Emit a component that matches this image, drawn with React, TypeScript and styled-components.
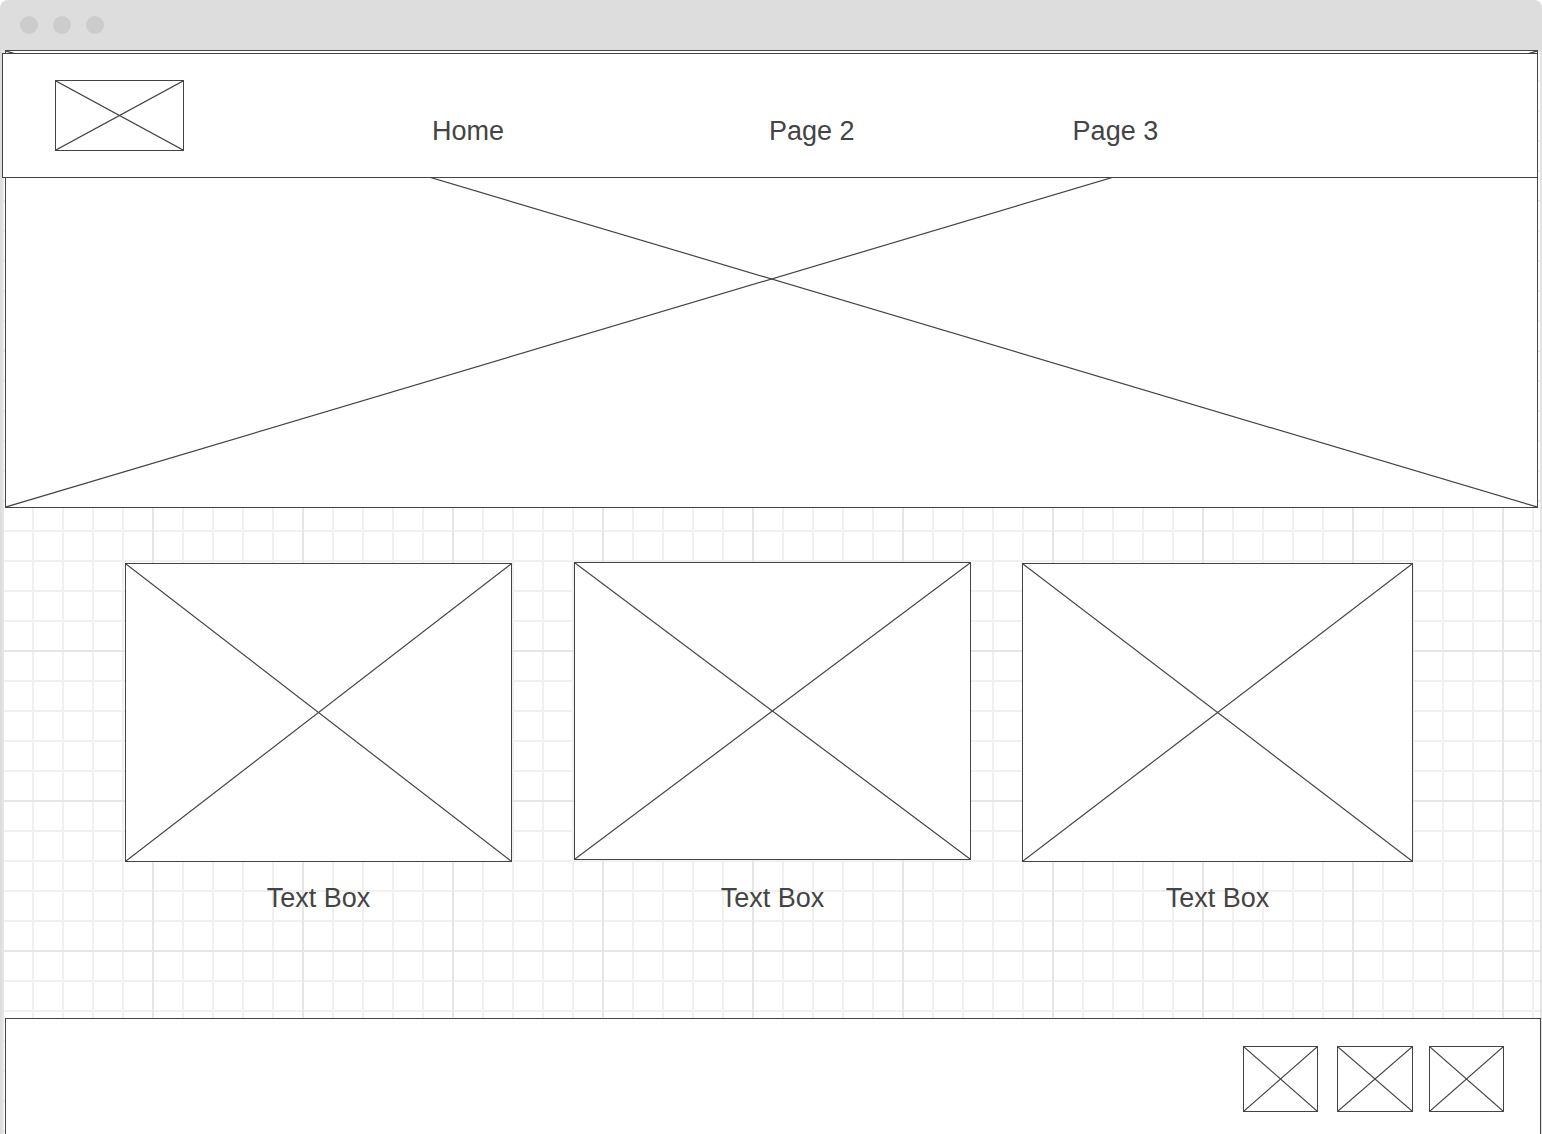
import React from "react";
import styled, { createGlobalStyle } from "styled-components";

const GlobalStyle = createGlobalStyle`
  html, body {
    margin: 0;
    padding: 0;
    background: #ffffff;
    overflow: hidden;
  }
  body {
    font-family: "Liberation Sans", Arial, sans-serif;
  }
`;

const Frame = styled.div`
  width: 1542px;
  height: 1134px;
  box-sizing: border-box;
  display: flex;
  flex-direction: column;
  overflow: hidden;
`;

const TitleBar = styled.div`
  height: 50px;
  flex: none;
  background: #dddddd;
  border-radius: 8px 8px 0 0;
  display: flex;
  align-items: center;
  gap: 15px;
  padding-left: 20px;
  box-sizing: border-box;
`;

const Dot = styled.span`
  width: 18px;
  height: 18px;
  border-radius: 50%;
  background: #cccccc;
`;

const Canvas = styled.div`
  flex: 1;
  border-left: 2px solid #dddddd;
  border-right: 2px solid #e2e2e2;
  background-color: #ffffff;
  background-image: linear-gradient(to right, #e6e6e6 2px, transparent 2px),
    linear-gradient(to bottom, #e6e6e6 2px, transparent 2px),
    linear-gradient(to right, #f0f0f0 2px, transparent 2px),
    linear-gradient(to bottom, #f0f0f0 2px, transparent 2px);
  background-size: 150px 150px, 150px 150px, 30px 30px, 30px 30px;
  display: flex;
  flex-direction: column;
`;

const HeroArea = styled.div`
  position: relative;
  padding-left: 3px;
`;

const Box = styled.div<{ $w: number; $h: number; $ml?: number }>`
  width: ${(p) => p.$w}px;
  height: ${(p) => p.$h}px;
  margin-left: ${(p) => p.$ml ?? 0}px;
  flex: none;
  box-sizing: border-box;
  border: 1px solid #444444;
  background: #ffffff;
  position: relative;
`;

const Cross = styled.svg`
  position: absolute;
  inset: 0;
  width: 100%;
  height: 100%;
  display: block;
`;

const Header = styled.header`
  position: absolute;
  top: 3px;
  left: 0;
  width: 1536px;
  height: 125px;
  box-sizing: border-box;
  border: 1px solid #444444;
  background: #ffffff;
  display: flex;
  align-items: flex-start;
  padding: 26px 0 0 52px;
`;

const NavLink = styled.a<{ $offset: number }>`
  margin-left: ${(p) => p.$offset}px;
  margin-top: 35px;
  font-size: 27px;
  line-height: 32px;
  color: #444444;
  text-decoration: none;
  white-space: nowrap;
`;

const CardRow = styled.section`
  height: 510px;
  flex: none;
  display: flex;
  align-items: flex-start;
  padding: 54px 0 0 123px;
  box-sizing: border-box;
`;

const Card = styled.div<{ $gap: number; $top: number }>`
  margin-left: ${(p) => p.$gap}px;
  margin-top: ${(p) => p.$top}px;
  display: flex;
  flex-direction: column;
  align-items: center;
`;

const Label = styled.div<{ $top: number }>`
  margin-top: ${(p) => p.$top}px;
  font-size: 27px;
  line-height: 32px;
  color: #444444;
`;

const Footer = styled.footer`
  margin-left: 3px;
  width: 1536px;
  height: 140px;
  box-sizing: border-box;
  border: 1px solid #444444;
  background: #ffffff;
  display: flex;
  justify-content: flex-end;
  align-items: flex-start;
  padding: 27px 36px 0 0;
`;

const Placeholder = ({ w, h, ml }: { w: number; h: number; ml?: number }) => (
  <Box $w={w} $h={h} $ml={ml}>
    <Cross viewBox="0 0 100 100" preserveAspectRatio="none">
      <line x1="0" y1="0" x2="100" y2="100" stroke="#444" strokeWidth="1.2" vectorEffect="non-scaling-stroke" />
      <line x1="0" y1="100" x2="100" y2="0" stroke="#444" strokeWidth="1.2" vectorEffect="non-scaling-stroke" />
    </Cross>
  </Box>
);

const cards = [
  { w: 387, h: 299, gap: 0, top: 1, label: 20 },
  { w: 397, h: 298, gap: 62, top: 0, label: 22 },
  { w: 391, h: 299, gap: 51, top: 1, label: 20 },
];

const navItems = [
  { label: "Home", offset: 248 },
  { label: "Page 2", offset: 265 },
  { label: "Page 3", offset: 218 },
];

const socials = [
  { w: 75, ml: 0 },
  { w: 76, ml: 19 },
  { w: 75, ml: 16 },
];

export default function App() {
  return (
    <Frame>
      <GlobalStyle />
      <TitleBar>
        <Dot />
        <Dot />
        <Dot />
      </TitleBar>
      <Canvas>
        <HeroArea>
          <Placeholder w={1533} h={458} />
          <Header>
            <Placeholder w={129} h={71} />
            {navItems.map((n) => (
              <NavLink key={n.label} href="#" $offset={n.offset}>
                {n.label}
              </NavLink>
            ))}
          </Header>
        </HeroArea>
        <CardRow>
          {cards.map((c, i) => (
            <Card key={i} $gap={c.gap} $top={c.top}>
              <Placeholder w={c.w} h={c.h} />
              <Label $top={c.label}>Text Box</Label>
            </Card>
          ))}
        </CardRow>
        <Footer>
          {socials.map((s, i) => (
            <Placeholder key={i} w={s.w} h={66} ml={s.ml} />
          ))}
        </Footer>
      </Canvas>
    </Frame>
  );
}
